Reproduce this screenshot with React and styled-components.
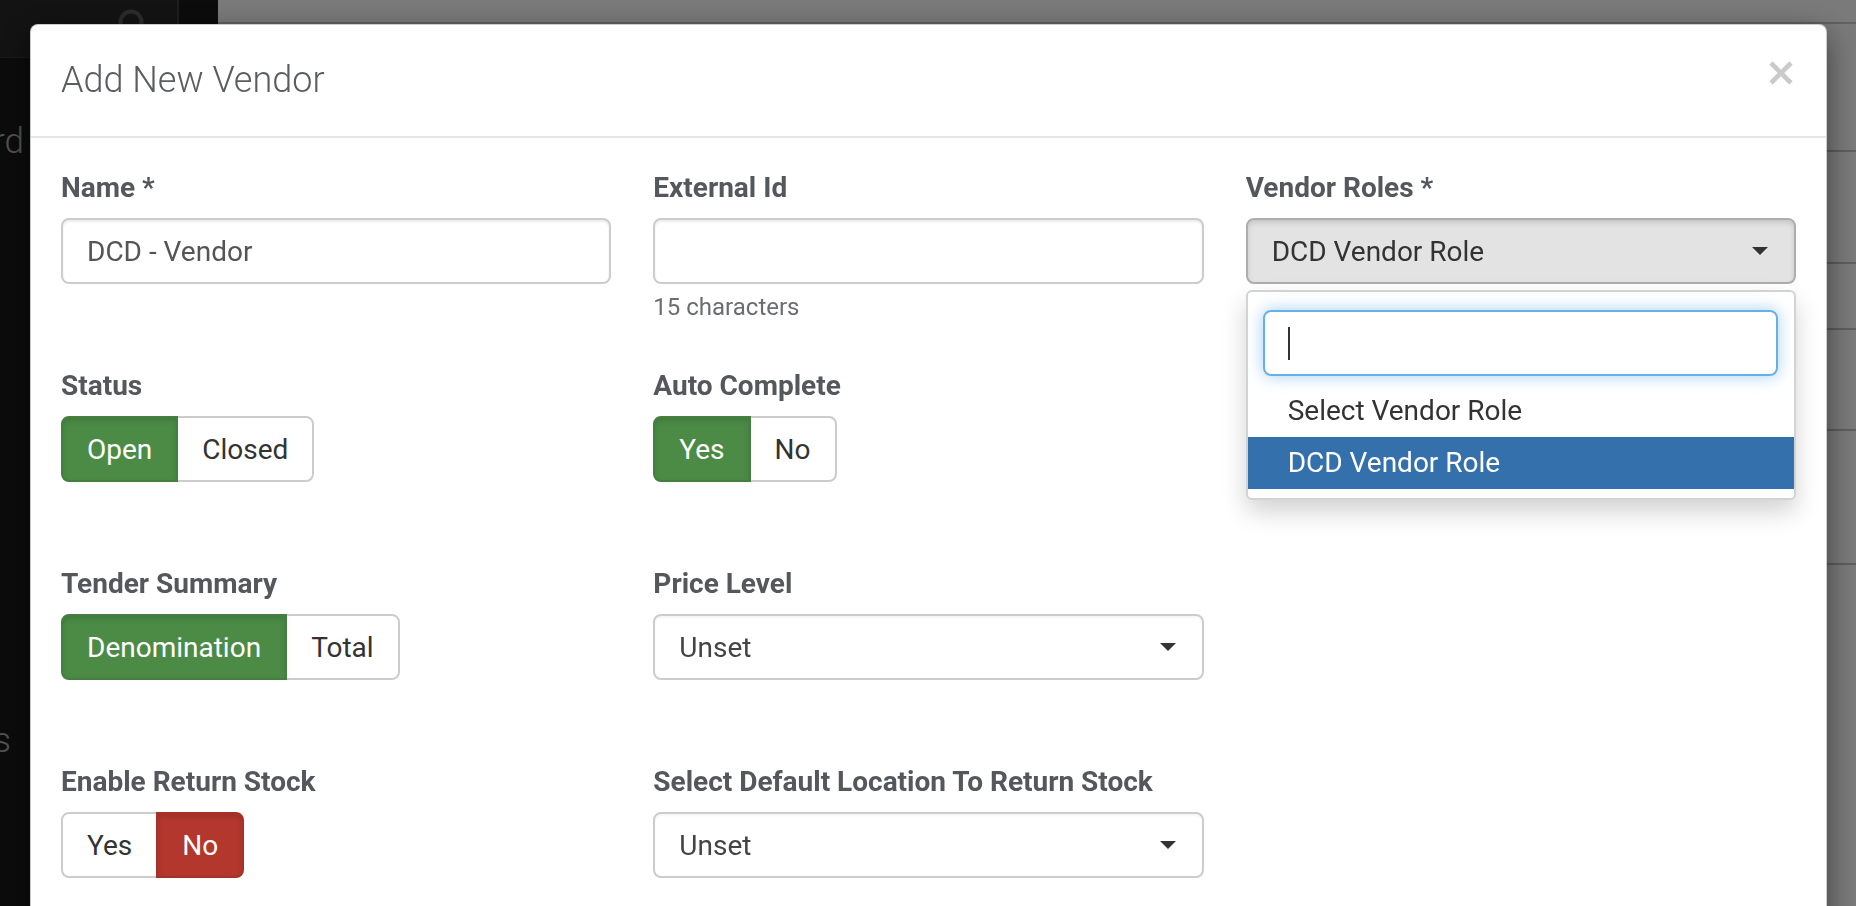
import React from "react";
import styled, { createGlobalStyle, css } from "styled-components";

const GlobalStyle = createGlobalStyle`
  html, body { margin: 0; padding: 0; }
  body {
    font-family: Roboto, "Liberation Sans", Arial, sans-serif;
    overflow: hidden;
    background: #f5f5f5;
  }
  * { box-sizing: border-box; }
`;

/* ---------- page behind the modal ---------- */
const Page = styled.div`
  display: flex;
  width: 1856px;
  height: 906px;
  overflow: hidden;
`;

const Sidebar = styled.aside`
  width: 218px;
  flex: none;
  background: #181818;
  display: flex;
  flex-direction: column;
`;

const SidebarHeader = styled.div`
  height: 58px;
  display: flex;
  border-bottom: 1px solid #343434;
`;

const SearchCell = styled.div`
  width: 179px;
  background: #262626;
  border-right: 2px solid #3c3c3c;
  padding: 9px 0 0 118px;
`;

const NavList = styled.nav`
  display: flex;
  flex-direction: column;
  padding-top: 59px;
`;

const NavItem = styled.div`
  height: 50px;
  width: ${(p) => p.$clip}px;
  margin-top: ${(p) => p.$offset || 0}px;
  display: flex;
  justify-content: flex-end;
  overflow: hidden;
  white-space: nowrap;
  font-size: 35px;
  font-weight: 300;
  line-height: 50px;
  color: #a4a4a4;
`;

const Main = styled.main`
  flex: 1;
  display: flex;
  flex-direction: column;
  background: #f5f5f5;
`;

const TopBar = styled.div`
  height: 24px;
  flex: none;
  border-bottom: 2px solid #c2c2c2;
`;

const ListRow = styled.div`
  height: ${(p) => p.$h}px;
  flex: none;
  border-bottom: 2px solid #bdbdbd;
`;

const Backdrop = styled.div`
  position: fixed;
  inset: 0;
  background: rgba(0, 0, 0, 0.5);
`;

/* ---------- modal ---------- */
const ModalLayer = styled.div`
  position: fixed;
  inset: 0;
  padding: 24px 29px 0 30px;
  overflow: hidden;
`;

const Modal = styled.div`
  width: 1797px;
  min-height: 1000px;
  background: #fff;
  border: 1px solid rgba(0, 0, 0, 0.2);
  border-radius: 8px;
  box-shadow: 0 10px 30px rgba(0, 0, 0, 0.5);
`;

const ModalHeader = styled.header`
  display: flex;
  align-items: flex-start;
  justify-content: space-between;
  padding: 35px 33px 36px 30px;
  border-bottom: 2px solid #e5e5e5;
`;

const Title = styled.h4`
  margin: 0;
  font-size: 36px;
  line-height: 40px;
  font-weight: 300;
  color: #5a5c60;
`;

const CloseButton = styled.button`
  border: 0;
  background: none;
  padding: 0;
  margin-top: 1px;
  width: 24px;
  height: 24px;
  display: flex;
  cursor: pointer;
`;

const ModalBody = styled.div`
  padding: 30px 30px;
  display: grid;
  grid-template-columns: repeat(3, 1fr);
  column-gap: 42px;
  row-gap: 30px;
  grid-auto-rows: 168px;
`;

const Field = styled.div`
  position: relative;
  display: flex;
  flex-direction: column;
  align-items: flex-start;
`;

const Label = styled.label`
  display: block;
  font-size: 28px;
  line-height: 40px;
  font-weight: 700;
  color: #54575c;
  margin-bottom: 10px;
`;

const controlBase = css`
  width: 100%;
  height: 66px;
  flex: none;
  border: 2px solid #ccc;
  border-radius: 8px;
  padding: 0 24px;
  font-family: Roboto, "Liberation Sans", Arial, sans-serif;
  font-size: 28px;
`;

const TextInput = styled.input`
  ${controlBase};
  color: #555;
  background: #fff;
  box-shadow: inset 0 2px 2px rgba(0, 0, 0, 0.075);
  outline: none;
`;

const Help = styled.span`
  margin-top: 6px;
  font-size: 24px;
  line-height: 34px;
  color: #6b6d70;
`;

const SelectBox = styled.div`
  ${controlBase};
  display: flex;
  align-items: center;
  justify-content: space-between;
  padding-right: 26px;
  color: ${(p) => (p.$open ? "#333" : "#444")};
  background: ${(p) => (p.$open ? "#e3e3e3" : "#fff")};
  border-color: ${(p) => (p.$open ? "#adadad" : "#ccc")};
  box-shadow: ${(p) =>
    p.$open ? "inset 0 3px 5px rgba(0,0,0,0.125)" : "inset 0 2px 2px rgba(0,0,0,0.04)"};
`;

const Caret = styled.span`
  width: 0;
  height: 0;
  border-top: 8px solid #333;
  border-left: 8px solid transparent;
  border-right: 8px solid transparent;
`;

const Dropdown = styled.div`
  position: absolute;
  top: 122px;
  left: 0;
  right: 0;
  z-index: 5;
  background: #fff;
  border: 2px solid #d3d3d3;
  border-radius: 6px;
  box-shadow: 0 12px 24px rgba(0, 0, 0, 0.175);
  padding-bottom: 9px;
`;

const SearchWrap = styled.div`
  padding: 18px 16px 9px 15px;
`;

const SearchField = styled.div`
  height: 66px;
  border: 2px solid #66afe9;
  border-radius: 8px;
  box-shadow: 0 0 16px rgba(102, 175, 233, 0.6);
  display: flex;
  align-items: center;
  padding-left: 23px;
`;

const TextCaret = styled.span`
  width: 2px;
  height: 33px;
  background: #333;
`;

const Option = styled.div`
  height: 52px;
  line-height: 52px;
  padding-left: 40px;
  font-size: 28px;
  color: ${(p) => (p.$active ? "#fff" : "#333")};
  background: ${(p) => (p.$active ? "#3470ab" : "transparent")};
`;

const ButtonGroup = styled.div`
  display: inline-flex;
`;

const ToggleButton = styled.button`
  height: 66px;
  padding: 0 24px;
  margin-left: -2px;
  font-family: Roboto, "Liberation Sans", Arial, sans-serif;
  font-size: 28px;
  border: 2px solid #ccc;
  background: #fff;
  color: #333;
  cursor: pointer;
  position: relative;

  &:first-child {
    margin-left: 0;
    border-radius: 8px 0 0 8px;
  }
  &:last-child {
    border-radius: 0 8px 8px 0;
  }

  ${(p) =>
    p.$tone === "success" &&
    css`
      background: #4b8b46;
      border-color: #437f3e;
      color: #fff;
      box-shadow: inset 0 3px 5px rgba(0, 0, 0, 0.125);
      z-index: 1;
    `}
  ${(p) =>
    p.$tone === "danger" &&
    css`
      background: #b3372d;
      border-color: #a53128;
      color: #fff;
      box-shadow: inset 0 3px 5px rgba(0, 0, 0, 0.125);
      z-index: 1;
    `}
`;

const CloseIcon = () => (
  <svg width="24" height="24" viewBox="0 0 24 24">
    <g stroke="#cacaca" strokeWidth="4.6" strokeLinecap="butt">
      <line x1="2" y1="2" x2="22" y2="22" />
      <line x1="22" y1="2" x2="2" y2="22" />
    </g>
  </svg>
);

const SearchIcon = () => (
  <svg width="30" height="30" viewBox="0 0 30 30">
    <circle cx="13" cy="13" r="10.5" fill="none" stroke="#575757" strokeWidth="4" />
    <line x1="21" y1="21" x2="28" y2="28" stroke="#575757" strokeWidth="4" />
  </svg>
);

const Toggle = ({ options, active, tone }) => (
  <ButtonGroup>
    {options.map((o) => (
      <ToggleButton key={o} type="button" $tone={o === active ? tone : undefined}>
        {o}
      </ToggleButton>
    ))}
  </ButtonGroup>
);

const Select = ({ value, open }) => (
  <SelectBox $open={open}>
    <span>{value}</span>
    <Caret />
  </SelectBox>
);

const rows = [128, 112, 66, 101, 134];

export default function App() {
  return (
    <>
      <GlobalStyle />
      <Page>
        <Sidebar>
          <SidebarHeader>
            <SearchCell>
              <SearchIcon />
            </SearchCell>
          </SidebarHeader>
          <NavList>
            <NavItem $clip={24}>Dashboard</NavItem>
            <NavItem $clip={11} $offset={549}>Vendors</NavItem>
          </NavList>
        </Sidebar>
        <Main>
          <TopBar />
          {rows.map((h, i) => (
            <ListRow key={i} $h={h} />
          ))}
        </Main>
      </Page>
      <Backdrop />
      <ModalLayer>
        <Modal>
          <ModalHeader>
            <Title>Add New Vendor</Title>
            <CloseButton type="button" aria-label="Close">
              <CloseIcon />
            </CloseButton>
          </ModalHeader>
          <ModalBody>
            <Field>
              <Label>Name *</Label>
              <TextInput defaultValue="DCD - Vendor" readOnly />
            </Field>
            <Field>
              <Label>External Id</Label>
              <TextInput defaultValue="" readOnly />
              <Help>15 characters</Help>
            </Field>
            <Field>
              <Label>Vendor Roles *</Label>
              <Select value="DCD Vendor Role" open />
              <Dropdown>
                <SearchWrap>
                  <SearchField>
                    <TextCaret />
                  </SearchField>
                </SearchWrap>
                <Option>Select Vendor Role</Option>
                <Option $active>DCD Vendor Role</Option>
              </Dropdown>
            </Field>

            <Field>
              <Label>Status</Label>
              <Toggle options={["Open", "Closed"]} active="Open" tone="success" />
            </Field>
            <Field>
              <Label>Auto Complete</Label>
              <Toggle options={["Yes", "No"]} active="Yes" tone="success" />
            </Field>
            <div />

            <Field>
              <Label>Tender Summary</Label>
              <Toggle options={["Denomination", "Total"]} active="Denomination" tone="success" />
            </Field>
            <Field>
              <Label>Price Level</Label>
              <Select value="Unset" />
            </Field>
            <div />

            <Field>
              <Label>Enable Return Stock</Label>
              <Toggle options={["Yes", "No"]} active="No" tone="danger" />
            </Field>
            <Field>
              <Label>Select Default Location To Return Stock</Label>
              <Select value="Unset" />
            </Field>
            <div />
          </ModalBody>
        </Modal>
      </ModalLayer>
    </>
  );
}
